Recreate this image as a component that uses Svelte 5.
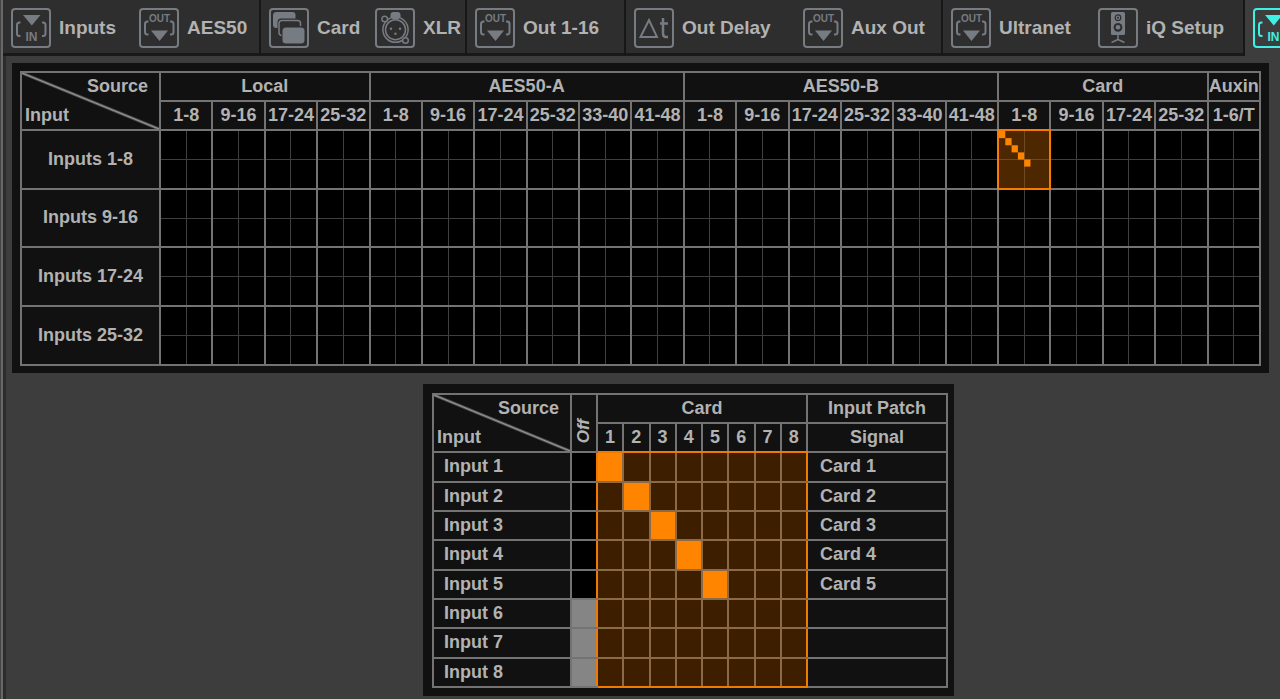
<script>
  const tabs = [
    { label: 'Inputs', icon: 'in' },
    { label: 'AES50', icon: 'out', last: true },
    { label: 'Card', icon: 'card' },
    { label: 'XLR', icon: 'xlr', last: true },
    { label: 'Out 1-16', icon: 'out', last: true },
    { label: 'Out Delay', icon: 'delay' },
    { label: 'Aux Out', icon: 'out', last: true },
    { label: 'Ultranet', icon: 'out' },
    { label: 'iQ Setup', icon: 'speaker', last: true },
    { label: '', icon: 'in' },
  ];
  let activeTab = $state(9);

  const ranges = ['1-8', '9-16', '17-24', '25-32', '33-40', '41-48'];
  const sources = [
    { name: 'Local', blocks: ranges.slice(0, 4) },
    { name: 'AES50-A', blocks: ranges },
    { name: 'AES50-B', blocks: ranges },
    { name: 'Card', blocks: ranges.slice(0, 4) },
    { name: 'Auxin', blocks: ['1-6/T'] },
  ];
  const blocks = sources.flatMap((s) => s.blocks.map((b) => `${s.name} ${b}`));
  const inputBanks = ['1-8', '9-16', '17-24', '25-32'];
  let selected = $state({ row: 0, col: 16 });

  const channels = [1, 2, 3, 4, 5, 6, 7, 8];
  // 0 means the input is off
  let patch = $state([1, 2, 3, 4, 5, 0, 0, 0]);
</script>

{#snippet icon(name)}
  <svg class="icon" viewBox="0 0 40 40" aria-hidden="true">
    <rect x="1" y="1" width="38" height="38" rx="3" class="line" stroke-width="2" />
    {#if name === 'in'}
      <path d="M12 7h17.500l-8.700 10.500z" class="fill" />
      <path d="M9.500 14.500H8.500q-2.500 0-2.500 2.500v8.500q0 2.500 2.500 2.500h1M31 14.500h1q2.500 0 2.500 2.500v8.500q0 2.500-2.500 2.500h-1" class="line" stroke-width="2" />
      <text x="20.500" y="33" text-anchor="middle" font-size="12">IN</text>
    {:else if name === 'out'}
      <path d="M12 22.500h17l-8.500 10.500z" class="fill" />
      <path d="M9.500 13.500H8.500q-2.500 0-2.500 2.500v8q0 2.500 2.500 2.500h1M31 13.500h1q2.500 0 2.500 2.500v8q0 2.500-2.500 2.500h-1" class="line" stroke-width="2" />
      <text x="20.500" y="13.500" text-anchor="middle" font-size="10">OUT</text>
    {:else if name === 'card'}
      <path d="M7.500 4h16q3 0 3 3v3.500H12q-3.500 0-3.500 3.500v6h-1q-3.500 0-3.500-3.500V7.500q0-3.500 3.500-3.500z" class="fill" />
      <path d="M12.500 27.500q-2.500-.500-2.500-3v-9q0-3 3-3h15.500q3 0 3 3v2.500" class="line" stroke-width="1.500" />
      <rect x="13.500" y="19.500" width="22" height="16" rx="3.500" class="fill" />
    {:else if name === 'xlr'}
      <path d="M15.500 9V7q0-3 3-3h4q3 0 3 3v2l-2 2h-6z" class="fill" />
      <circle cx="20.500" cy="21.700" r="12.600" class="line" stroke-width="1.500" />
      <circle cx="20.500" cy="21.700" r="10" class="line" stroke-width="1.500" />
      <circle cx="9.700" cy="11" r="2.800" class="knob" stroke-width="1.500" />
      <circle cx="30.500" cy="32.500" r="2.800" class="knob" stroke-width="1.500" />
      <circle cx="16" cy="20.800" r="1.200" class="fill" />
      <circle cx="25" cy="20.800" r="1.200" class="fill" />
      <circle cx="20.500" cy="25.800" r="1.200" class="fill" />
    {:else if name === 'delay'}
      <path d="M6.500 29L15 12l8 17z" class="line" stroke-width="2" />
      <path d="M29 10v15.500q0 3.500 3 3.500h2M26 15.500h8" class="line" stroke-width="2.500" />
    {:else}
      <rect x="13" y="4" width="14" height="23" rx="1.500" class="fill" />
      <circle cx="20" cy="9.700" r="2.800" class="cut" stroke-width="1.200" />
      <circle cx="20" cy="9.700" r="1" class="hole" />
      <circle cx="20" cy="19.300" r="4.400" class="hole" />
      <circle cx="20" cy="19.300" r="2.300" class="fill" />
      <path d="M20 27v4.500l-6.500 3M20 31.500l6.500 3" class="line" stroke-width="1.500" />
    {/if}
  </svg>
{/snippet}

<div class="app">
  <nav class="toolbar">
    {#each tabs as tab, i}
      <button
        type="button"
        class="tab"
        class:last={tab.last}
        class:active={activeTab === i}
        aria-label={tab.label || 'Input patch'}
        onclick={() => (activeTab = i)}
      >
        {@render icon(tab.icon)}
        {#if tab.label}<span>{tab.label}</span>{/if}
      </button>
    {/each}
  </nav>

  <main>
    <section class="panel">
      <table class="overview">
        <colgroup>
          <col class="bank" />
          {#each blocks as _}<col />{/each}
        </colgroup>
        <thead>
          <tr>
            <th rowspan="2" class="corner"><div><span>Source</span><span>Input</span></div></th>
            {#each sources as s}<th colspan={s.blocks.length}>{s.name}</th>{/each}
          </tr>
          <tr>
            {#each sources as s}{#each s.blocks as b}<th>{b}</th>{/each}{/each}
          </tr>
        </thead>
        <tbody>
          {#each inputBanks as bank, row}
            <tr>
              <th>Inputs {bank}</th>
              {#each blocks as block, col}
                {@const on = selected.row === row && selected.col === col}
                <td>
                  <button
                    type="button"
                    class="block"
                    class:on
                    aria-label="Inputs {bank}, {block}"
                    onclick={() => (selected = { row, col })}
                  >
                    {#if row === 0 && col === 16}
                      <svg viewBox="0 0 8 8" preserveAspectRatio="none" aria-hidden="true">
                        {#each patch as p, i}
                          {#if p}<rect x={p - 1} y={i} width="1" height="1" />{/if}
                        {/each}
                      </svg>
                    {/if}
                  </button>
                </td>
              {/each}
            </tr>
          {/each}
        </tbody>
      </table>
    </section>

    <section class="panel detail-panel">
      <table class="detail">
        <colgroup>
          <col class="name" />
          <col class="off" />
          {#each channels as _}<col />{/each}
          <col class="signal" />
        </colgroup>
        <thead>
          <tr>
            <th rowspan="2" class="corner"><div><span>Source</span><span>Input</span></div></th>
            <th rowspan="2" class="off-head"><span>Off</span></th>
            <th colspan="8">Card</th>
            <th>Input Patch</th>
          </tr>
          <tr>
            {#each channels as c}<th class="channel">{c}</th>{/each}
            <th>Signal</th>
          </tr>
        </thead>
        <tbody>
          {#each channels as ch, i}
            <tr>
              <th class="left">Input {ch}</th>
              <td class="off-cell">
                <input type="radio" name="input-{ch}" value={0} bind:group={patch[i]} aria-label="Input {ch} off" />
              </td>
              {#each channels as c}
                <td class="point" class:end={c === 8}>
                  <input type="radio" name="input-{ch}" value={c} bind:group={patch[i]} aria-label="Input {ch}, Card {c}" />
                </td>
              {/each}
              <td class="left signal-cell">{patch[i] ? `Card ${patch[i]}` : ''}</td>
            </tr>
          {/each}
        </tbody>
      </table>
    </section>
  </main>
</div>

<style>
  :global(body) {
    margin: 0;
    border-left: 1px solid #444;
    background: #3d3d3d;
  }
  .app {
    min-height: 100vh;
    box-sizing: border-box;
    border-left: 2px solid #686868;
    background: #3d3d3d;
    color: #b2b2b2;
    font: bold 18px/20px 'Liberation Sans', Arial, sans-serif;
    overflow: hidden;
  }
  .toolbar {
    display: grid;
    grid-template-columns: 128px 130px 106px 100px 159px 169px 148px 147px 155px 48px;
    height: 56px;
  }
  .tab {
    display: flex;
    align-items: center;
    gap: 8px;
    margin: 0;
    padding: 3px 0 0 8px;
    border: 0;
    border-bottom: 3px solid #191919;
    background: #2e2e2e;
    color: inherit;
    font: inherit;
    font-size: 19px;
    white-space: nowrap;
    --icon: #777b82;
  }
  .tab.last {
    border-right: 2px solid #171717;
  }
  .tab.active {
    background: #3d3d3d;
    border-color: #3d3d3d;
    --icon: #3ff0e6;
  }
  .icon {
    flex: none;
    width: 40px;
    height: 40px;
  }
  .icon .line {
    fill: none;
    stroke: var(--icon);
  }
  .icon .knob {
    fill: #2e2e2e;
    stroke: var(--icon);
  }
  .icon .fill,
  .icon text {
    fill: var(--icon);
  }
  .icon .cut {
    fill: none;
    stroke: #2e2e2e;
  }
  .icon .hole {
    fill: #2e2e2e;
  }
  main {
    padding: 7px 11px 3px 6px;
    border-left: 3px solid #2c2c2c;
  }
  .panel {
    padding: 8px 8px 7px;
    background: #111;
  }
  .detail-panel {
    width: fit-content;
    margin: 11px auto 0;
    padding: 9px 6px 8px 9px;
    position: relative;
    left: 48px;
  }
  table {
    table-layout: fixed;
    border-collapse: collapse;
  }
  .overview {
    width: 100%;
  }
  .detail {
    width: 516px;
  }
  .bank {
    width: 139px;
  }
  .name {
    width: 138px;
  }
  .off {
    width: 26px;
  }
  .signal {
    width: 140px;
  }
  th,
  td {
    height: 27px;
    padding: 0;
    border: 2px solid #737373;
    text-align: center;
    white-space: nowrap;
  }
  th {
    height: 25px;
    padding-bottom: 2px;
  }
  .corner {
    background: linear-gradient(to top right, transparent calc(50% - 2px), #999 50%, transparent calc(50% + 2px));
  }
  .corner div {
    display: grid;
    gap: 9px;
    padding: 0 11px 0 3px;
  }
  .corner span:first-child {
    text-align: right;
  }
  .corner span:last-child {
    text-align: left;
  }
  .overview td {
    height: 57px;
    background: #000;
  }
  .overview tbody tr:nth-child(2) td {
    height: 56px;
  }
  .block {
    display: block;
    width: 100%;
    height: 100%;
    padding: 0;
    border: 0;
    background:
      linear-gradient(#3f3f3f, #3f3f3f) center / 1px 100% no-repeat,
      linear-gradient(#3f3f3f, #3f3f3f) center / 100% 1px no-repeat,
      #000;
  }
  .block.on {
    outline: 2px solid #f57c00;
    background:
      linear-gradient(#6e4a24, #6e4a24) center / 1px 100% no-repeat,
      linear-gradient(#6e4a24, #6e4a24) center / 100% 1px no-repeat,
      #4d2700;
  }
  .block svg {
    display: block;
    width: 100%;
    height: 100%;
    fill: #ff8400;
  }
  th.off-head {
    padding-bottom: 8px;
    vertical-align: bottom;
    line-height: 0;
  }
  .off-head span {
    display: inline-block;
    font-size: 17px;
    font-style: italic;
    line-height: 20px;
    writing-mode: vertical-rl;
    rotate: 180deg;
  }
  .detail tbody tr:nth-child(3n + 1) > .point {
    height: 28px;
  }
  .left {
    height: 25px;
    padding-bottom: 2px;
    padding-left: 10px;
    text-align: left;
  }
  .signal-cell {
    padding-left: 12px;
  }
  .off-cell {
    border-right-color: #f07a00;
    background: #000;
  }
  .channel {
    border-bottom-color: #f07a00;
  }
  .point {
    border-color: #8c6a48;
    background: #3d1f00;
  }
  .off-cell + .point {
    border-left-color: #f07a00;
  }
  .point.end {
    border-right-color: #f07a00;
  }
  tr:first-child > .point {
    border-top-color: #f07a00;
  }
  tr:last-child > .point {
    border-bottom-color: #f07a00;
  }
  input {
    appearance: none;
    display: block;
    width: 100%;
    height: 100%;
    margin: 0;
  }
  .off-cell input:checked {
    background: #858585;
  }
  .point input:checked {
    background: #ff8400;
  }
</style>
